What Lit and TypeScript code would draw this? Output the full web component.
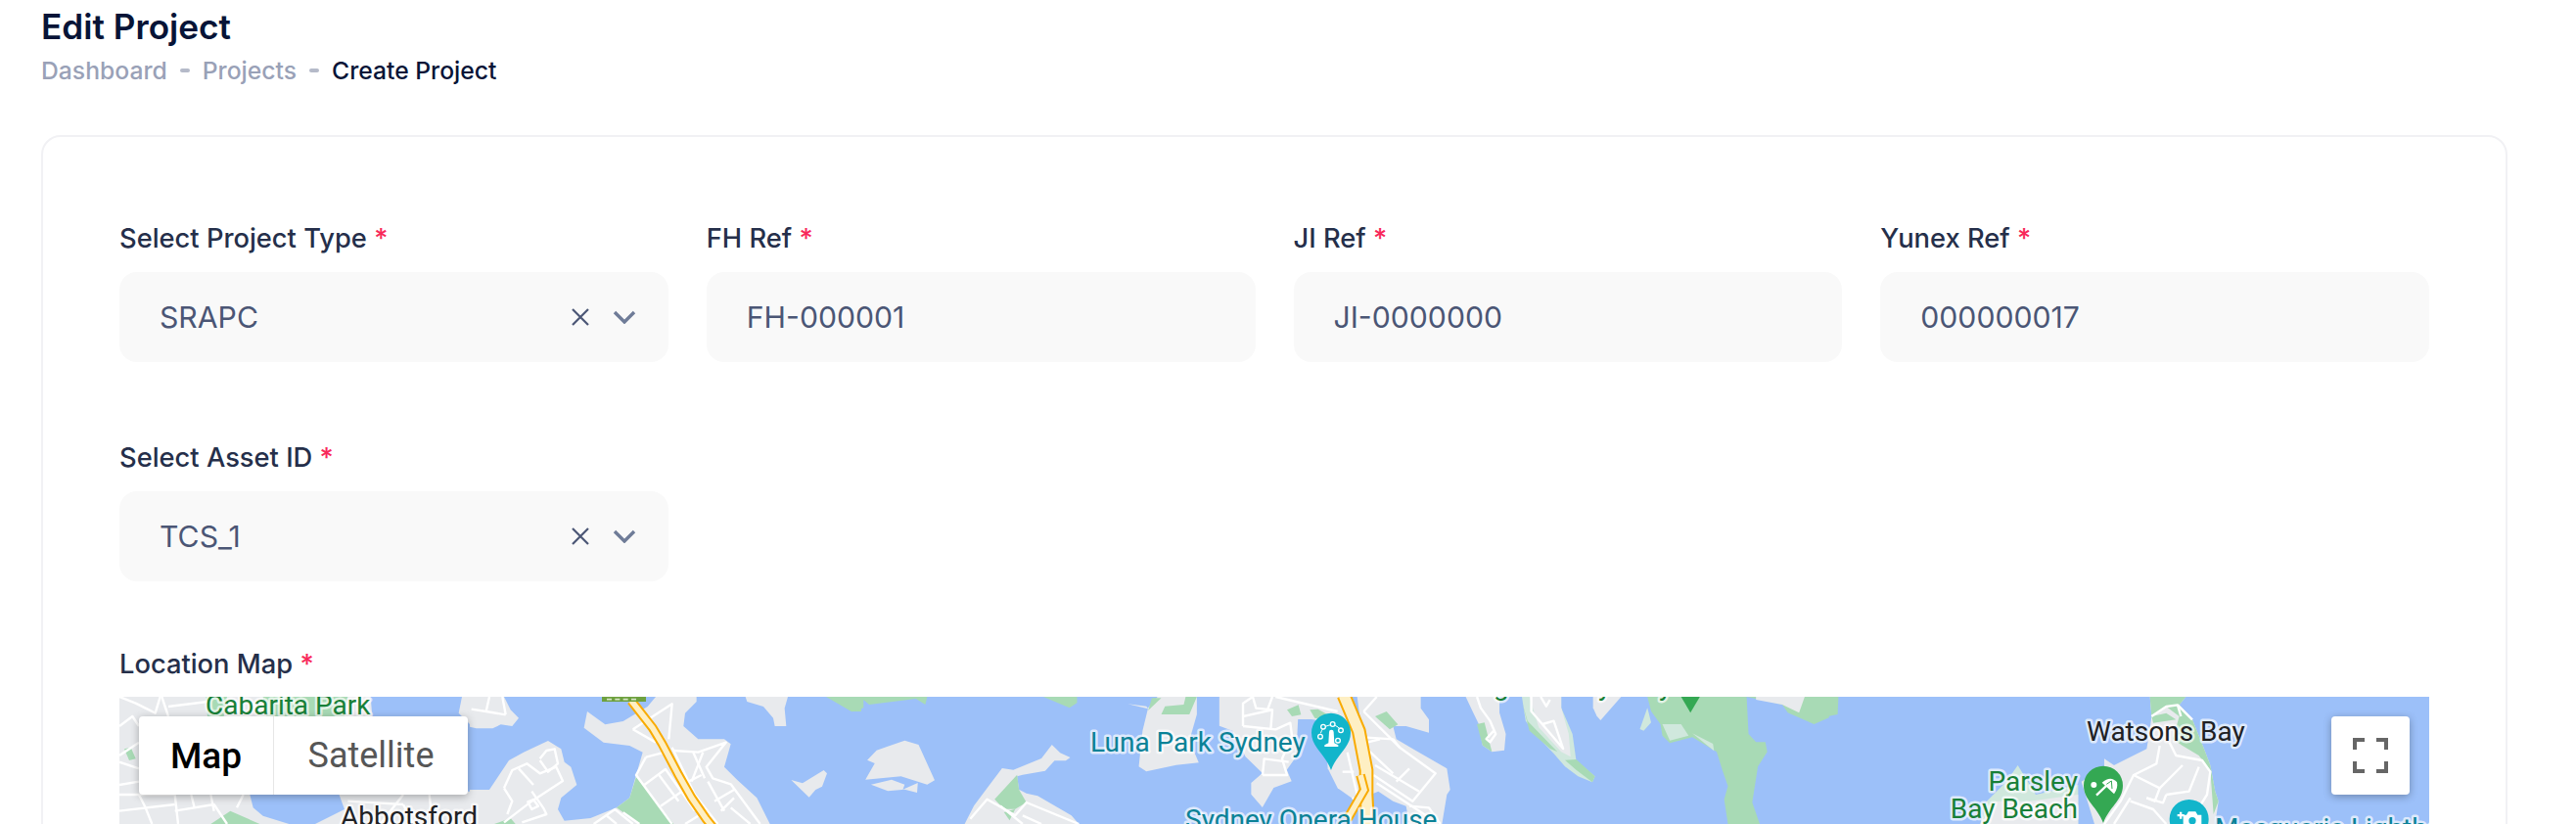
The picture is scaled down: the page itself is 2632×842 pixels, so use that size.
import { LitElement, html, css, svg } from "lit";
import { customElement } from "lit/decorators.js";

const poly = (c: string, d: string) => svg`<path class=${c} d=${d} />`;
const roads = (list: string[]) => list.map((d) => svg`<path class="road" d=${d} />`);
const pin = (cx: number, cy: number, c: string) =>
  svg`<path class=${c} d="M${cx} ${cy + 115}C${cx - 18} ${cy + 65} ${cx - 60} ${cy + 45} ${cx - 60} ${cy}A60 60 0 1 1 ${cx + 60} ${cy}C${cx + 60} ${cy + 45} ${cx + 18} ${cy + 65} ${cx} ${cy + 115}Z" />`;

const mapSvg = svg`
<svg class="mapsvg" viewBox="0 0 2360 130" width="2360" height="130">
  <rect class="water" width="2360" height="130" />

  <g transform="scale(.33333)">
    ${poly("land", "M0 0H770L775 60 600 150 400 300 410 340 440 365 520 390H0Z")}
    ${poly("land", "M670 290H1200V390H600L690 345Z")}
    ${poly("land", "M1050 0H1080V90L1040 50Z")}
    ${poly("park", "M15 160 35 155 50 190 30 195Z")}
    ${poly("park", "M280 390 340 350 430 390Z")}
    ${poly("park", "M265 0H330L320 60H270ZM440 0H700L690 60H450Z")}
    ${roads([
      "M0 0L50 20 110 50 125 0", "M130 0L150 60", "M150 30L270 15", "M0 90L40 60 60 90", "M0 180L60 140",
      "M0 270L60 260", "M0 200L60 220", "M0 300H170L180 390", "M60 300L80 340 100 390", "M0 350L170 330",
      "M170 350L290 330 330 390", "M220 300L230 340", "M280 300L290 350", "M380 300L360 340",
      "M800 390L870 300", "M870 330L900 390", "M950 300L960 390", "M700 320L870 330",
    ])}
  </g>

  <g transform="translate(358) scale(.33333)">
    ${poly("land", "M0 0H105L125 40 150 65 130 90 95 85 70 97H20L0 92Z")}
    ${poly("land", "M0 285H60L120 195 165 170 240 135 280 160 290 200 310 215 328 270 280 310 270 345 290 380 370 372 450 340 490 310 510 240 530 170 490 150 410 140 350 95 360 45 415 85 470 75 545 30 570 0H695V15L660 50 655 90 700 130H780L800 145 780 215 820 255 880 310 920 390H0Z")}
    ${poly("land", "M845 0H975L965 35 970 90H935L930 65 900 30 850 15Z")}
    ${poly("land", "M985 255 1020 265 1085 225 1095 235 1080 275 1060 285 1040 308Z")}
    ${poly("park", "M510 245 625 390H520L450 340 490 310Z")}
    ${poly("park", "M75 390 125 372 140 390Z")}
    ${poly("park", "M1095 0 1170 45H1200V0Z")}
    ${roads([
      "M5 38L50 45 110 55", "M50 45L60 0", "M100 0L110 55",
      "M105 280L130 225 175 205 215 235 265 215 285 258 190 320 105 385",
      "M150 220L195 270", "M105 280L130 320 115 360", "M215 190L235 165 260 160 270 205 240 230 215 195",
      "M190 290L225 340 235 360 160 385", "M178 322L195 315 210 335 190 345Z",
      "M500 100L620 22 610 130", "M500 100L570 140", "M540 185L590 172", "M540 185L510 240 620 390",
      "M625 165L700 170 785 140 725 215 745 250 800 268 890 390", "M685 170L720 250", "M715 170L680 260",
      "M535 270L600 222 690 350", "M580 240L640 320", "M585 335L650 290", "M670 260L710 240", "M730 260L780 350",
      "M750 320L810 285", "M770 350L810 310", "M800 340L860 390", "M380 390L445 345 500 390", "M420 365L450 390",
      "M470 355L520 390", "M660 390L700 365", "M620 155L690 300 760 390",
    ])}
    <path class="hw-o" d="M495 12L560 95 590 145 640 240 680 310 725 375 745 400" />
    <path class="hw-c" d="M495 12L560 95 590 145 640 240 680 310 725 375 745 400" />
    <rect class="sign" x="405" width="135" height="15" />
    <path class="sign-d" d="M420 8H435M445 8H460M470 8H485M495 8H510" />
  </g>

  <g transform="translate(678,-22) scale(.3827,.33333)">
    ${poly("park", "M115 66 185 112 215 100V75L230 90 355 72 380 90 385 66Z")}
    ${poly("park", "M695 66 765 100 785 85V66Z")}
    ${poly("land", "M225 260 250 230 325 200 362 213 405 322 385 335 315 310 220 320 245 270Z")}
    ${poly("land", "M235 335 290 320 325 335 320 350 360 330 358 360 325 350 280 355Z")}
    ${poly("land", "M585 285 615 290 690 255 718 213 740 238 767 252 755 262H725L700 293 640 305 625 310 630 350 650 362 680 370 770 430 790 456H485L510 400Z")}
    ${poly("park", "M625 305 565 380 590 410H620L650 390 630 350Z")}
    ${poly("park", "M590 420 620 410 605 445Z")}
    ${roads(["M500 440L545 380 620 430 650 390 790 456", "M580 400L640 456", "M640 430L690 456"])}
    ${poly("land", "M1000 66H1105V120L1085 200 1110 268 1050 275 970 295 950 280 960 170 975 100Z")}
    ${poly("park", "M985 70H1010L975 108Z")}
    ${poly("park", "M1075 66H1105L1085 120H1010L1020 95 1070 90Z")}
    ${poly("land", "M920 88 970 95 975 103Z")}
    ${poly("land", "M1165 66H1500V150L1410 135 1375 135 1370 250 1345 290 1358 325 1310 345 1280 405 1250 365V330L1280 300 1235 250 1200 170 1165 155Z")}
  </g>

  <g transform="translate(1098) scale(.33333)">
    ${poly("land", "M400 55H500L515 320 490 315 440 280 410 220Z")}
    ${poly("land", "M500 0H695V35L720 70V110L650 90H610L620 130 680 165 775 220 785 285 775 300 760 390H660L650 335 610 320 565 290 540 300Z")}
    ${poly("park", "M285 40 320 25 328 55 300 60Z")}
    ${poly("park", "M355 40 380 38 410 55 395 70 370 65Z")}
    ${poly("park", "M555 60 590 45 625 85 600 100Z")}
    ${roads([
      "M250 0L440 45", "M150 90V20L180 0", "M150 60L240 40", "M210 240L215 190 290 200",
      "M150 90L250 100 295 80 300 120 270 190 285 240H210", "M180 0L190 35 240 40 235 100", "M225 40L240 0",
      "M520 45L560 0", "M520 45L630 155 740 235 670 320 550 240", "M530 125L610 130 630 155", "M530 160L610 235",
      "M555 210L690 290", "M620 260L660 220", "M530 140L570 130", "M560 265L720 370", "M660 335L720 340 755 390",
      "M470 170L500 300", "M455 230H490", "M485 310L520 330 510 300",
    ])}
    <path class="hw-o wide" d="M459 -5L505 105 528 225V300L533 395" />
    <path class="hw-c wide" d="M459 -5L505 105 528 225V300L533 395" />
    <path class="hw-o" d="M510 240L522 285 470 375" />
    <path class="hw-c" d="M510 240L522 285 470 375" />
  </g>

  <g transform="translate(1278,-22) scale(.3827,.33333)">
    ${poly("land", "M255 66H345V115L362 180 358 230 325 235 300 215 290 150 275 115Z")}
    ${poly("park", "M285 150 305 145 325 235 300 215Z")}
    ${roads(["M285 66L295 100 320 140 335 180 320 205 310 195 330 170"])}
    ${poly("pale", "M405 66 415 140 440 180 490 240 520 280 555 310 593 328 600 310 550 262 540 180 510 100V66Z")}
    ${poly("land", "M425 66H510V100L530 180 535 250 510 235 450 160Z")}
    ${poly("park", "M405 80 420 140 500 235 480 225 425 170Z")}
    ${poly("park", "M520 260 550 258 600 310 593 328 550 290Z")}
    ${roads(["M430 66V110L515 225 490 140 460 150", "M455 66L470 95 480 75"])}
    ${poly("land", "M595 66H670L615 138 605 125 595 100Z")}
    ${poly("park", "M740 66H1005L1010 180 1030 205H1055L1060 235 1035 280 1020 390 1040 456H955L945 380 955 340 940 290 925 235 860 190 800 208 780 185 775 150 750 110Z")}
    ${poly("pale", "M720 165 740 100 750 145 730 170Z")}
    ${poly("pale", "M780 150 830 150 850 185 800 200Z")}
    ${poly("pale", "M860 178 915 210 918 232Z")}
    ${poly("park", "M1005 66 1100 90 1115 115 1185 150 1225 130V125L1248 120 1250 66Z")}
    ${poly("land", "M1030 66H1160L1145 115 1100 90 1030 75Z")}
    ${poly("gpin", "M830 66 855 115 880 66Z")}
  </g>

  <g transform="translate(1858) scale(.33333)">
    ${poly("pale", "M245 210 210 260 150 320 130 390H430V270L300 300Z")}
    ${poly("land", "M650 0H760L740 25 780 70 820 170 835 210 850 290 860 320 850 390H480L440 260 510 215V190L540 210 580 190 640 160 650 100 655 60Z")}
    ${poly("park", "M650 0H760L740 25 780 70 820 170 835 210 850 290 860 320 845 360 835 225 800 180 750 150 720 130 740 60 700 30 655 60Z")}
    ${poly("park", "M655 60 700 50 730 70 660 80Z")}
    ${poly("land", "M130 390 180 320H280L430 300V390Z")}
    ${roads([
      "M510 390L560 320 600 240 670 205 680 150", "M710 140L730 180 810 195 835 230 825 300 800 340",
      "M600 240L680 280 750 210", "M680 280L665 320 640 310", "M640 310L690 325 700 300", "M700 300L770 290 800 215",
      "M540 390L590 310", "M655 60L700 30 735 25 780 70", "M735 25L745 60", "M590 320L660 345 700 390",
    ])}
  </g>

  <g class="labels">
    <text class="green" x="88" y="18">Cabarita Park</text>
    <text class="dark" x="226" y="132">Abbotsford</text>
    <text class="teal" x="992" y="56">Luna Park Sydney</text>
    <text class="teal" x="1089" y="135">Sydney Opera House</text>
    <text class="dark" x="2010" y="45">Watsons Bay</text>
    <text class="green" x="2001" y="96" text-anchor="end">Parsley</text>
    <text class="green" x="2001" y="124" text-anchor="end">Bay Beach</text>
    <text class="teal" x="2141" y="144">Macquarie Lighthouse</text>
    <text class="green" x="1404" y="-2">g</text>
    <text class="green" x="1511" y="-2">y</text>
    <text class="green" x="1573" y="-2">y</text>
  </g>

  <g transform="translate(1098) scale(.33333)">
    ${pin(420, 110, "tpin")}
    <path class="ico" d="M388 112A34 34 0 0 1 448 100" />
    <circle class="ring" cx="396" cy="92" r="7" /><circle class="ring" cx="425" cy="84" r="7" />
    <circle class="ring" cx="450" cy="103" r="7" /><circle class="ring" cx="441" cy="134" r="7" />
    <circle class="ring" cx="387" cy="122" r="7" />
    <path class="wht" d="M414 108A7 7 0 0 1 428 108L430 142 442 148V153H400V148L412 142Z" />
  </g>
  <g transform="translate(1858) scale(.33333)">
    ${pin(507, 272, "gpin")}
    <circle class="wht" cx="478" cy="270" r="9" />
    <path class="wht" d="M503 263Q530 240 549 262 553 280 540 298Z" />
    <path class="ico2" d="M486 302L532 258" />
    <path class="rib" d="M517 268L532 258 534 282" />
    ${pin(770, 375, "tpin")}
    <path class="wht" d="M741 353H748V360H755V367H748V374H741V367H734V360H741Z" />
    <path class="wht" d="M752 385V362H762L768 352H790L796 362H808V395H752Z" />
    <circle class="tlens" cx="780" cy="380" r="11" />
  </g>
</svg>`;

@customElement("app-root")
export class AppRoot extends LitElement {
  static styles = css`
    :host {
      display: block;
      height: 842px;
      overflow: hidden;
      background: #fff;
      font-family: Inter, "Liberation Sans", sans-serif;
    }
    .page { padding: 0 70px 0 42px; }
    h1 {
      margin: 0;
      padding-top: 7px;
      font-size: 35.2px;
      line-height: 40px;
      font-weight: 600;
      color: #071437;
    }
    .crumbs {
      display: flex;
      align-items: center;
      height: 32px;
      margin-top: 9px;
      font-size: 24.7px;
      font-weight: 500;
      color: #99a1b7;
    }
    .crumbs .sep {
      width: 10px;
      height: 4px;
      border-radius: 2px;
      background: #b5bac9;
      margin: 0 13px;
    }
    .crumbs .cur { color: #071437; }
    .card {
      margin-top: 50px;
      border: 2px solid #f1f1f4;
      border-radius: 20px;
      padding: 86px 78px 0;
      height: 800px;
    }
    .row {
      display: grid;
      grid-template-columns: repeat(4, 1fr);
      column-gap: 39px;
      margin-bottom: 80px;
    }
    .row.last { margin-bottom: 67px; }
    .label {
      height: 36px;
      line-height: 36px;
      font-size: 27.3px;
      font-weight: 500;
      color: #252f4a;
      margin-bottom: 16px;
      white-space: nowrap;
    }
    .label.tight { margin-bottom: 15px; }
    .star { color: #f8285a; }
    .box {
      height: 92px;
      border-radius: 18px;
      background: #f9f9f9;
      display: flex;
      align-items: center;
      padding: 0 33px 0 41px;
      font-size: 30.2px;
      font-weight: 400;
      color: #4b5675;
    }
    .val { flex: 1; }
    .x { width: 20px; height: 20px; stroke: #4b5675; stroke-width: 2.2; fill: none; margin-right: 23px; }
    .chev { width: 24px; height: 14px; stroke: #6f7c98; stroke-width: 3.4; fill: none; }
    .map {
      position: relative;
      height: 130px;
      overflow: hidden;
    }
    .mapsvg { display: block; }
    .water { fill: #9cc0f9; }
    .land { fill: #e8eaed; }
    .park { fill: #a8dab5; }
    .pale { fill: #d0e8dd; }
    .road { fill: none; stroke: #fff; stroke-width: 2.4; vector-effect: non-scaling-stroke; stroke-linejoin: round; }
    .hw-o { fill: none; stroke: #f9ab00; stroke-width: 29; }
    .hw-c { fill: none; stroke: #feefc3; stroke-width: 17; }
    .hw-o.wide { stroke-width: 44; }
    .hw-c.wide { stroke-width: 32; }
    .sign { fill: #6ea13f; }
    .sign-d { stroke: #d5e3c5; stroke-width: 5; fill: none; }
    .gpin { fill: #34a853; }
    .tpin { fill: #12b5cb; }
    .wht { fill: #fff; }
    .ico { fill: none; stroke: #fff; stroke-width: 3; }
    .ico2 { fill: none; stroke: #fff; stroke-width: 7; }
    .rib { fill: none; stroke: #34a853; stroke-width: 3; }
    .ring { fill: #12b5cb; stroke: #fff; stroke-width: 4; }
    .tlens { fill: #12b5cb; }
    .labels text {
      font-family: Roboto, sans-serif;
      font-size: 28px;
      paint-order: stroke;
      stroke: rgba(255, 255, 255, 0.68);
      stroke-width: 5px;
      stroke-linejoin: round;
    }
    .labels .green { fill: #188038; }
    .labels .dark { fill: #202124; }
    .labels .teal { fill: #0b8297; }
    .ctl {
      position: absolute;
      left: 20px;
      top: 20px;
      height: 80px;
      display: flex;
      background: #fff;
      border-radius: 4px;
      box-shadow: 0 2px 8px rgba(0, 0, 0, 0.3);
      font-family: Roboto, sans-serif;
      font-size: 36px;
      overflow: hidden;
    }
    .ctl div { display: flex; align-items: center; justify-content: center; }
    .ctl .m { width: 138px; color: #000; font-weight: 500; font-size: 37px; border-right: 1px solid #e6e6e6; box-sizing: border-box; }
    .ctl .s { width: 198px; color: #565656; }
    .fs {
      position: absolute;
      left: 2260px;
      top: 20px;
      width: 80px;
      height: 80px;
      background: #fff;
      border-radius: 4px;
      box-shadow: 0 2px 8px rgba(0, 0, 0, 0.3);
      display: flex;
      align-items: center;
      justify-content: center;
    }
    .fs svg { fill: #666; width: 36px; height: 36px; }
  `;

  private field(label: string, value: string, sel = false) {
    return html`<div>
      <div class="label">${label} <span class="star">*</span></div>
      <div class="box">
        <span class="val">${value}</span>
        ${sel
          ? html`<svg class="x" viewBox="0 0 20 20"><path d="M2 2L18 18M18 2L2 18" /></svg>
              <svg class="chev" viewBox="0 0 24 14"><path d="M2 2L12 12 22 2" /></svg>`
          : ""}
      </div>
    </div>`;
  }

  render() {
    return html`<div class="page">
      <h1>Edit Project</h1>
      <div class="crumbs">
        <span>Dashboard</span><span class="sep"></span><span>Projects</span><span class="sep"></span>
        <span class="cur">Create Project</span>
      </div>
      <div class="card">
        <div class="row">
          ${this.field("Select Project Type", "SRAPC", true)} ${this.field("FH Ref", "FH-000001")}
          ${this.field("JI Ref", "JI-0000000")} ${this.field("Yunex Ref", "000000017")}
        </div>
        <div class="row last">${this.field("Select Asset ID", "TCS_1", true)}</div>
        <div class="label tight">Location Map <span class="star">*</span></div>
        <div class="map">
          ${mapSvg}
          <div class="ctl"><div class="m">Map</div><div class="s">Satellite</div></div>
          <div class="fs">
            <svg viewBox="0 0 36 36"><path d="M0 0H12V4H4V12H0ZM24 0H36V12H32V4H24ZM0 24H4V32H12V36H0ZM32 24H36V36H24V32H32Z" /></svg>
          </div>
        </div>
      </div>
    </div>`;
  }
}
